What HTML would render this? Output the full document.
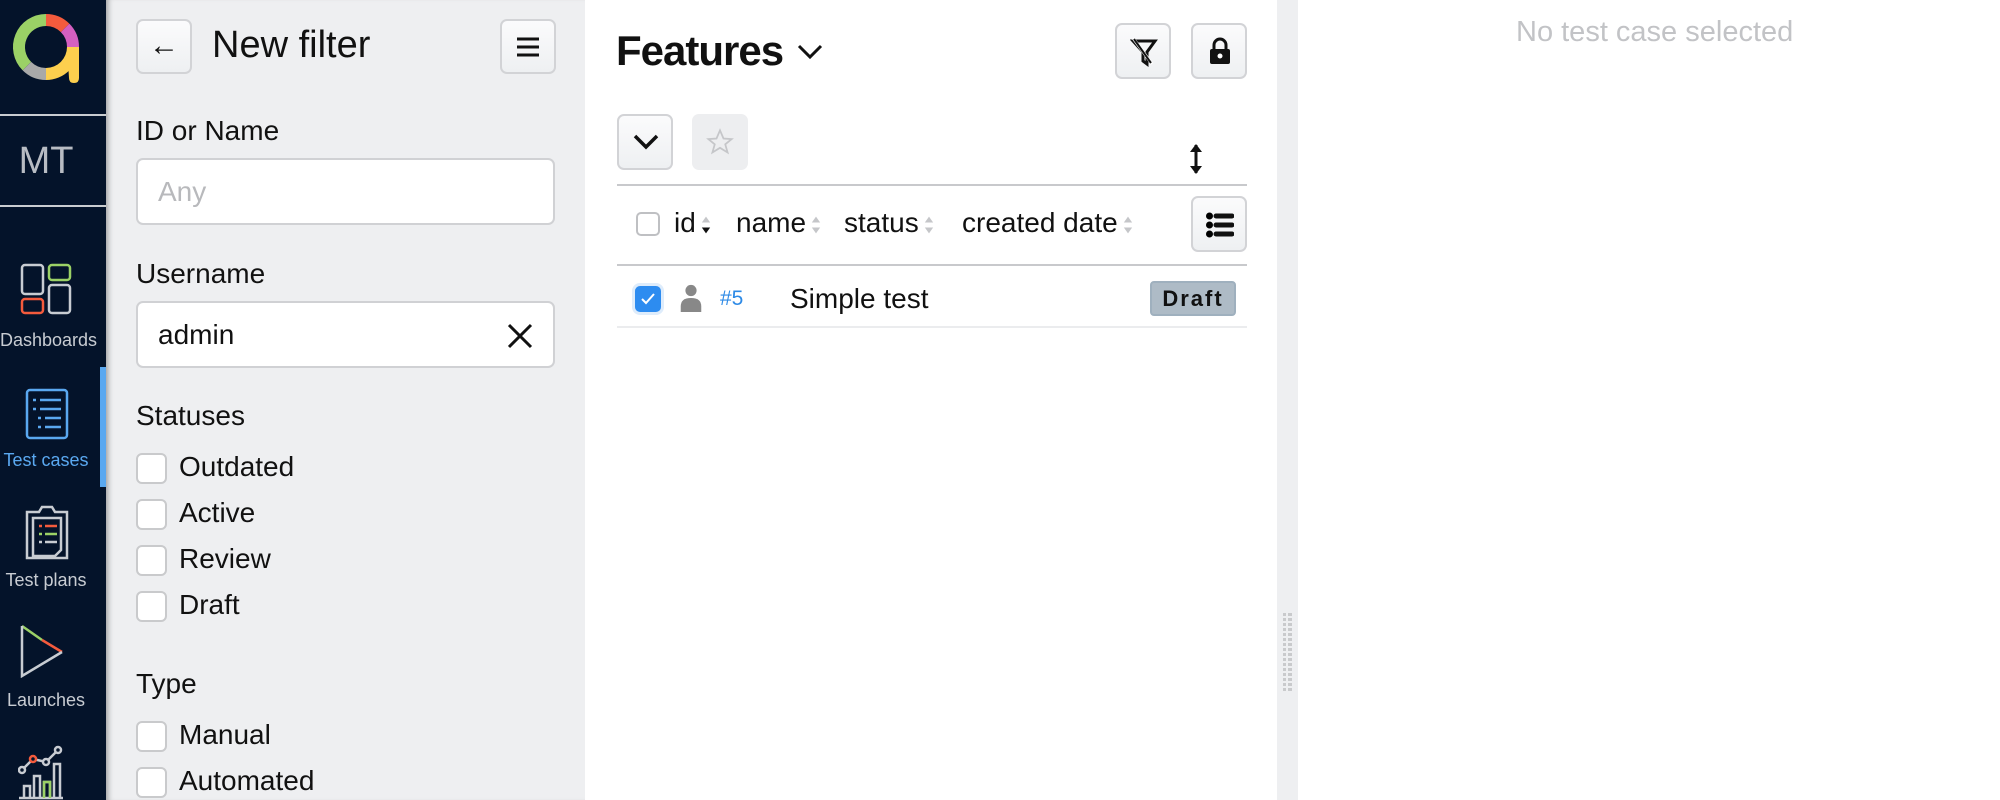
<!DOCTYPE html>
<html><head><meta charset="utf-8"><style>
*{box-sizing:border-box;margin:0;padding:0}
body{width:2000px;height:800px;overflow:hidden;background:#fff;font-family:"Liberation Sans",sans-serif;position:relative;color:#111}
.a{position:absolute}
#side{left:0;top:0;width:106px;height:800px;background:#04132a}
.lbl{position:absolute;left:0;width:92px;text-align:center;font-size:18px;color:#c8ccd2;white-space:nowrap}
#filt{left:106px;top:0;width:479px;height:800px;background:#eeeff1;box-shadow:inset 6px 0 6px -4px rgba(0,0,0,.35)}
.btn{position:absolute;border:2px solid #d2d3d6;border-radius:7px;background:linear-gradient(#fbfbfc,#eef0f2)}
.inp{position:absolute;left:136px;width:419px;height:67px;background:#fff;border:2px solid #d0d1d4;border-radius:7px;font-size:28px;padding-left:20px;line-height:63px}
.t{position:absolute;font-size:28px;white-space:nowrap}
.cb{position:absolute;left:136px;width:31px;height:31px;border:2px solid #c9cacc;border-radius:6px;background:#fff}
.sa{display:inline-block;width:10px;vertical-align:middle;margin-left:5px}
</style></head><body>
<div id="side" class="a">
  <svg class="a" style="left:10px;top:11px" width="74" height="76" viewBox="0 0 74 76">
    <g fill="none" stroke-width="12">
    <path d="M36 9 A27 27 0 0 0 16.9 55.1" stroke="#9bd166"/>
    <path d="M16.9 55.1 A27 27 0 0 0 36 63" stroke="#a9a9a9"/>
    <path d="M36 9 A27 27 0 0 1 55.1 16.9" stroke="#f45b3d"/>
    <path d="M55.1 16.9 A27 27 0 0 1 63 36" stroke="#d45fc0"/>
    </g>
    <path d="M69 36 A33 33 0 0 1 36 69 L36 57 A21 21 0 0 0 57 36 Z" fill="#fdcf4e"/>
    <path d="M57 36 H69 V67 Q69 72 64 72 Q59 72 59 67 Z" fill="#fdcf4e"/>
  </svg>
  <div class="a" style="left:0;top:114px;width:106px;height:2px;background:#c9ccd0"></div>
  <div class="a" style="left:0;width:92px;top:140px;text-align:center;font-size:38px;color:#b8bcc3">MT</div>
  <div class="a" style="left:0;top:205px;width:106px;height:2px;background:#c9ccd0"></div>
  <svg class="a" style="left:20px;top:263px" width="52" height="52" viewBox="0 0 52 52" fill="none" stroke-width="2.5">
    <rect x="2" y="2" width="21" height="29" rx="3" stroke="#c8ccd2"/>
    <rect x="29" y="2" width="21" height="15" rx="3" stroke="#9bd166"/>
    <rect x="2" y="36" width="21" height="14" rx="3" stroke="#f45b3d"/>
    <rect x="29" y="22" width="21" height="28" rx="3" stroke="#c8ccd2"/>
  </svg>
  <div class="lbl" style="top:330px">Dashboards</div>
  <div class="a" style="left:100px;top:367px;width:6px;height:120px;background:#5aa8f0"></div>
  <svg class="a" style="left:25px;top:388px" width="44" height="52" viewBox="0 0 44 52" fill="none" stroke="#5aa8f0" stroke-width="2.5">
    <rect x="2" y="2" width="40" height="48" rx="3"/>
    <path d="M8 12h3M15 12h21M8 21h3M15 21h21M13 30h3M20 30h16M13 39h3M20 39h16"/>
  </svg>
  <div class="lbl" style="top:450px;color:#5aa8f0">Test cases</div>
  <svg class="a" style="left:25px;top:504px" width="44" height="56" viewBox="0 0 44 56" fill="none" stroke-width="2.5">
    <path d="M2 8h12l3-5h10l3 5h12v46H2z" stroke="#c8ccd2"/>
    <path d="M8 14h28v32l-6 6H8z" stroke="#c8ccd2"/>
    <path d="M14 22h3M20 22h12" stroke="#f45b3d"/><path d="M14 30h3M20 30h12" stroke="#9bd166"/>
    <path d="M14 38h3M20 38h12" stroke="#c8ccd2"/>
  </svg>
  <div class="lbl" style="top:570px">Test plans</div>
  <svg class="a" style="left:20px;top:624px" width="44" height="54" viewBox="0 0 44 54" fill="none" stroke-width="2.5">
    <path d="M2 2 L22 16" stroke="#9bd166"/><path d="M22 16 L42 28" stroke="#f45b3d"/>
    <path d="M42 28 L2 52 L2 2" stroke="#c8ccd2"/>
  </svg>
  <div class="lbl" style="top:690px">Launches</div>
  <svg class="a" style="left:18px;top:744px" width="46" height="56" viewBox="0 0 46 56" fill="none" stroke-width="2.5">
    <path d="M4 26 L15 15 L28 18 L40 6" stroke="#c8ccd2"/>
    <circle cx="4" cy="26" r="3" stroke="#c8ccd2" fill="#04132a"/><circle cx="15" cy="15" r="3" stroke="#f45b3d" fill="#04132a"/>
    <circle cx="28" cy="18" r="3" stroke="#c8ccd2" fill="#04132a"/><circle cx="40" cy="6" r="3" stroke="#c8ccd2" fill="#04132a"/>
    <path d="M1 54h44M6 54V42h6v12M16 54V32h6v22M26 54V38h6v16M36 54V20h6v34" stroke="#c8ccd2"/>
    <path d="M26 54V38h6v16" stroke="#9bd166"/>
  </svg>
</div>
<div id="filt" class="a"></div>
<div class="btn" style="left:136px;top:19px;width:56px;height:55px"><div style="text-align:center;font-size:30px;line-height:50px;font-weight:bold">←</div></div>
<div class="t" style="left:212px;top:24px;font-size:38px">New filter</div>
<div class="btn" style="left:500px;top:19px;width:56px;height:55px"><svg style="position:absolute;left:14px;top:14px" width="24" height="24" viewBox="0 0 24 24"><path d="M1 4h22M1 12h22M1 20h22" stroke="#111" stroke-width="3"/></svg></div>
<div class="t" style="left:136px;top:115px">ID or Name</div>
<div class="inp" style="top:158px;color:#b8b9bc">Any</div>
<div class="t" style="left:136px;top:258px">Username</div>
<div class="inp" style="top:301px">admin<svg style="position:absolute;right:20px;top:20px" width="26" height="26" viewBox="0 0 26 26"><path d="M2 2L24 24M24 2L2 24" stroke="#111" stroke-width="3"/></svg></div>
<div class="t" style="left:136px;top:400px">Statuses</div>
<div class="cb" style="top:453px"></div><div class="t" style="left:179px;top:451px">Outdated</div>
<div class="cb" style="top:499px"></div><div class="t" style="left:179px;top:497px">Active</div>
<div class="cb" style="top:545px"></div><div class="t" style="left:179px;top:543px">Review</div>
<div class="cb" style="top:591px"></div><div class="t" style="left:179px;top:589px">Draft</div>
<div class="t" style="left:136px;top:668px">Type</div>
<div class="cb" style="top:721px"></div><div class="t" style="left:179px;top:719px">Manual</div>
<div class="cb" style="top:767px"></div><div class="t" style="left:179px;top:765px">Automated</div>

<div class="t" style="left:616px;top:27px;font-size:42px;font-weight:bold;letter-spacing:-1px">Features</div>
<svg class="a" style="left:797px;top:44px" width="26" height="16" viewBox="0 0 26 16"><path d="M2 2L13 13L24 2" fill="none" stroke="#111" stroke-width="3"/></svg>
<div class="btn" style="left:1115px;top:23px;width:56px;height:56px"><svg style="position:absolute;left:13px;top:12px" width="28" height="30" viewBox="0 0 28 30"><path d="M3 4h22l-8 11v12l-4-3v-9z" fill="none" stroke="#111" stroke-width="3"/><path d="M3 1L22 27" stroke="#fff" stroke-width="3"/><path d="M4 2L21 26" stroke="#111" stroke-width="2"/></svg></div>
<div class="btn" style="left:1191px;top:23px;width:56px;height:56px"><svg style="position:absolute;left:16px;top:12px" width="22" height="28" viewBox="0 0 22 28"><path d="M5 12V8a6 6 0 0 1 12 0v4" fill="none" stroke="#111" stroke-width="3"/><rect x="1" y="12" width="20" height="15" rx="2" fill="#111"/><circle cx="11" cy="19" r="2.5" fill="#fff"/></svg></div>
<div class="btn" style="left:617px;top:114px;width:56px;height:56px"><svg style="position:absolute;left:14px;top:17px" width="26" height="18" viewBox="0 0 26 18"><path d="M2 3L13 14L24 3" fill="none" stroke="#111" stroke-width="3.5"/></svg></div>
<div class="a" style="left:692px;top:114px;width:56px;height:56px;background:#edeef0;border-radius:7px"><svg style="position:absolute;left:14px;top:14px" width="28" height="28" viewBox="0 0 24 24"><path d="M12 2l3 7 7 .5-5.5 4.5 2 7-6.5-4-6.5 4 2-7L2 9.5 9 9z" fill="none" stroke="#c5c6c9" stroke-width="1.5"/></svg></div>
<svg class="a" style="left:1188px;top:142px" width="16" height="34" viewBox="0 0 16 34"><path d="M8 3v28" stroke="#111" stroke-width="3"/><path d="M2 10L8 2L14 10zM2 24L8 32L14 24z" fill="#111"/></svg>
<div class="a" style="left:617px;top:184px;width:630px;height:2px;background:#c8c9cc"></div>
<div class="a" style="left:636px;top:212px;width:24px;height:24px;border:2px solid #bfc0c3;border-radius:5px"></div>
<div class="t" style="left:674px;top:207px">id<svg class="sa" width="12" height="26" viewBox="0 0 12 26"><path d="M1 10L6 3L11 10z" fill="#c5c6c9"/><path d="M1 16L6 23L11 16z" fill="#111"/></svg></div>
<div class="t" style="left:736px;top:207px">name<svg class="sa" width="12" height="26" viewBox="0 0 12 26"><path d="M1 10L6 3L11 10zM1 16L6 23L11 16z" fill="#c5c6c9"/></svg></div>
<div class="t" style="left:844px;top:207px">status<svg class="sa" width="12" height="26" viewBox="0 0 12 26"><path d="M1 10L6 3L11 10zM1 16L6 23L11 16z" fill="#c5c6c9"/></svg></div>
<div class="t" style="left:962px;top:207px">created date<svg class="sa" width="12" height="26" viewBox="0 0 12 26"><path d="M1 10L6 3L11 10zM1 16L6 23L11 16z" fill="#c5c6c9"/></svg></div>
<div class="btn" style="left:1191px;top:196px;width:56px;height:56px"><svg style="position:absolute;left:13px;top:14px" width="28" height="26" viewBox="0 0 28 26"><circle cx="3.5" cy="4" r="3.5"/><circle cx="3.5" cy="13" r="3.5"/><circle cx="3.5" cy="22" r="3.5"/><path d="M10 4h16M10 13h16M10 22h16" stroke="#111" stroke-width="5" stroke-linecap="round"/></svg></div>
<div class="a" style="left:617px;top:264px;width:630px;height:2px;background:#c8c9cc"></div>
<div class="a" style="left:635px;top:286px;width:26px;height:26px;background:#2d8cf0;border-radius:5px;box-shadow:0 0 0 3px #deecfb"><svg style="position:absolute;left:5px;top:6px" width="16" height="14" viewBox="0 0 16 14"><path d="M2 7l4 4 8-9" fill="none" stroke="#fff" stroke-width="2"/></svg></div>
<svg class="a" style="left:680px;top:284px" width="22" height="28" viewBox="0 0 22 30"><circle cx="11" cy="7" r="6" fill="#888"/><path d="M0 30v-6q0-9 11-9q11 0 11 9v6z" fill="#888"/></svg>
<div class="t" style="left:720px;top:287px;font-size:21px;color:#2d8ae6">#5</div>
<div class="t" style="left:790px;top:283px">Simple test</div>
<div class="a" style="left:1150px;top:281px;width:86px;height:35px;background:#aebbc6;border:2px solid #9fb0be;border-radius:4px;font-size:22px;font-weight:bold;text-align:center;line-height:31px;letter-spacing:2px">Draft</div>
<div class="a" style="left:617px;top:326px;width:630px;height:2px;background:#ebecee"></div>

<div class="a" style="left:1277px;top:0;width:21px;height:800px;background:#eeeff1"></div>
<div class="a" style="left:1283px;top:613px;width:9px;height:78px;background:repeating-linear-gradient(#c9cacc 0 3px,transparent 3px 5px);-webkit-mask:linear-gradient(90deg,#000 0 3px,transparent 3px 5px,#000 5px 8px)"></div>
<div class="t" style="left:1516px;top:16px;font-size:29px;color:#c2c3c6">No test case selected</div>
</body></html>
